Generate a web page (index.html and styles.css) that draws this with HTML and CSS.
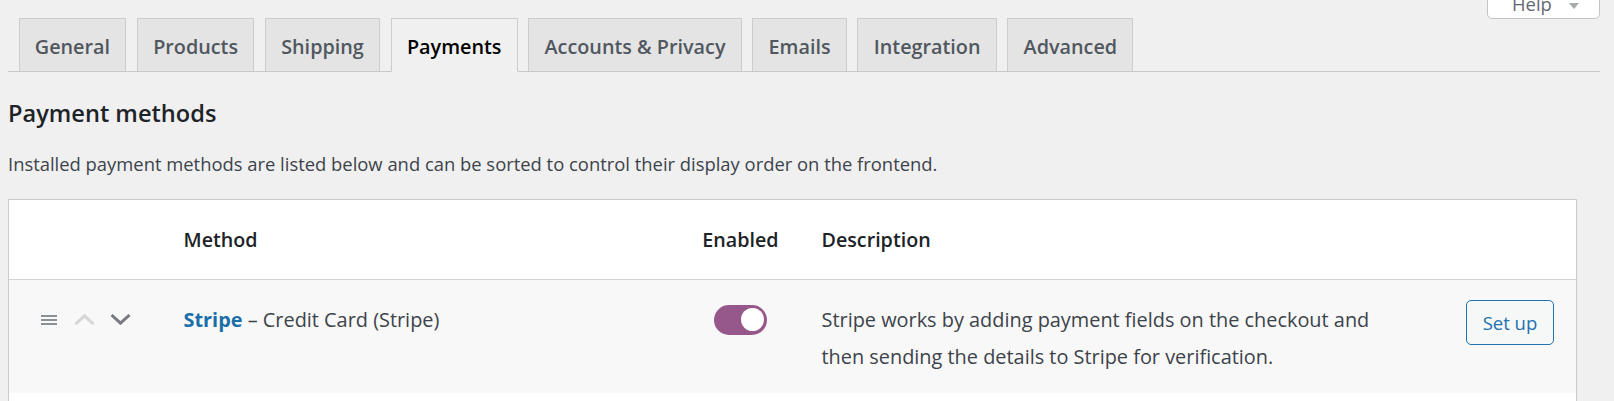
FILE: index.html
```html
<!DOCTYPE html>
<html lang="en">
<head>
<meta charset="utf-8">
<title>Payments settings</title>
<link rel="stylesheet" href="styles.css">
</head>
<body>
<div class="wrap">
  <button class="help-link">Help <svg class="help-caret" width="10" height="6" viewBox="0 0 10 6"><path d="M0 0 L5 6 L10 0 Z" fill="#a7aaad"/></svg></button>

  <nav class="tabs">
    <a class="tab">General</a>
    <a class="tab">Products</a>
    <a class="tab">Shipping</a>
    <a class="tab tab-active">Payments</a>
    <a class="tab">Accounts &amp; Privacy</a>
    <a class="tab">Emails</a>
    <a class="tab">Integration</a>
    <a class="tab">Advanced</a>
  </nav>

  <h2 class="section-title">Payment methods</h2>
  <p class="section-desc">Installed payment methods are listed below and can be sorted to control their display order on the frontend.</p>

  <div class="methods">
    <div class="row row-head">
      <div class="cell cell-sort"></div>
      <div class="cell cell-name">Method</div>
      <div class="cell cell-enabled">Enabled</div>
      <div class="cell cell-desc">Description</div>
      <div class="cell cell-action"></div>
    </div>
    <div class="row row-item">
      <div class="cell cell-sort">
        <svg class="ico-handle" width="16" height="10" viewBox="0 0 16 10"><rect x="0" y="0" width="16" height="2" fill="#8c8f94"/><rect x="0" y="4" width="16" height="2" fill="#8c8f94"/><rect x="0" y="8" width="16" height="2" fill="#8c8f94"/></svg>
        <svg class="ico-chev" width="21" height="11" viewBox="0 0 21 11"><polyline points="1.5,10 10.5,1.8 19.5,10" fill="none" stroke="#d6d6d6" stroke-width="3"/></svg>
        <svg class="ico-chev" width="21" height="11" viewBox="0 0 21 11"><polyline points="1.5,1 10.5,9.2 19.5,1" fill="none" stroke="#787c82" stroke-width="3"/></svg>
      </div>
      <div class="cell cell-name"><a class="method-link">Stripe</a> – Credit Card (Stripe)</div>
      <div class="cell cell-enabled"><span class="toggle"><span class="toggle-knob"></span></span></div>
      <div class="cell cell-desc">Stripe works by adding payment fields on the checkout and<br>then sending the details to Stripe for verification.</div>
      <div class="cell cell-action"><button class="btn-setup">Set up</button></div>
    </div>
    <div class="row row-blank"></div>
  </div>
</div>
</body>
</html>
```

FILE: styles.css
```css
html, body {
  margin: 0;
  padding: 0;
  background: #f0f0f1;
  overflow: hidden;
}

body {
  font-family: "Open Sans", "Noto Sans", sans-serif;
  color: #3c434a;
  font-size: 18.4px;
}

.wrap {
  position: relative;
  padding: 0 14px 0 8px;
}

.help-link {
  position: absolute;
  top: -21px;
  right: 14px;
  width: 113px;
  height: 40px;
  box-sizing: border-box;
  padding: 9px 0 0 24px;
  text-align: left;
  background: #fff;
  border: 1px solid #c3c4c7;
  border-radius: 0 0 5px 5px;
  font-family: inherit;
  font-size: 18.4px;
  line-height: 24px;
  color: #646970;
}

.help-caret {
  margin-left: 12px;
  vertical-align: middle;
}

.tabs {
  display: flex;
  align-items: flex-end;
  padding-top: 18px;
  border-bottom: 1px solid #c8c8c8;
}

.tab {
  display: block;
  margin-left: 10.5px;
  padding: 3px 15.3px 0;
  height: 49px;
  line-height: 49px;
  border: 1px solid #cccccc;
  border-bottom: none;
  background: #e4e4e4;
  color: #50575e;
  font-weight: 600;
  font-size: 19.8px;
  white-space: nowrap;
}

.tab-active {
  background: #f0f0f1;
  color: #000;
  margin-bottom: -1px;
  border-bottom: 1px solid #f0f0f1;
}

.section-title {
  margin: 25px 0 0;
  font-size: 23.6px;
  line-height: 32px;
  font-weight: 600;
  color: #1d2327;
}

.section-desc {
  margin: 23px 0 0;
  font-size: 18.4px;
  line-height: 24px;
  color: #3c434a;
}

.methods {
  margin-top: 23px;
  margin-right: 23px;
  background: #fff;
  border: 1px solid #c8cbcf;
  border-bottom: none;
}

.row {
  display: grid;
  grid-template-columns: 174.5px 490px 134px 1fr auto;
}

.row-head {
  height: 79px;
  align-items: center;
  border-bottom: 1px solid #d0d2d5;
  font-weight: 600;
  color: #1d2327;
  font-size: 19.7px;
}

.row-head .cell {
  padding-top: 0;
}

.row-item {
  background: #f8f8f8;
  padding: 21px 0 18px;
  line-height: 37px;
  font-size: 19.9px;
}

.row-blank {
  height: 40px;
  background: #fff;
}

.cell-sort {
  display: flex;
  align-items: center;
  gap: 17px;
  padding-left: 32px;
  height: 37px;
}

.ico-chev {
  display: block;
}

.cell-sort .ico-chev:last-child {
  margin-left: -2px;
}

.cell-enabled {
  text-align: center;
}

.cell-desc {
  padding-left: 14px;
}

.cell-action {
  padding-right: 22px;
}

.method-link {
  color: #1b6fa8;
  font-weight: 700;
}

.toggle {
  display: inline-block;
  position: relative;
  vertical-align: middle;
  width: 53px;
  height: 30px;
  border-radius: 15px;
  background: #96588a;
  margin-top: -4px;
}

.toggle-knob {
  position: absolute;
  top: 3.5px;
  right: 3px;
  width: 23px;
  height: 23px;
  border-radius: 50%;
  background: #fff;
}

.btn-setup {
  display: block;
  margin-top: -1px;
  width: 88px;
  height: 45px;
  box-sizing: border-box;
  border: 1px solid #2271b1;
  border-radius: 5px;
  background: #f6f7f7;
  color: #2271b1;
  font-family: inherit;
  font-size: 18.5px;
  padding: 0;
}
```
